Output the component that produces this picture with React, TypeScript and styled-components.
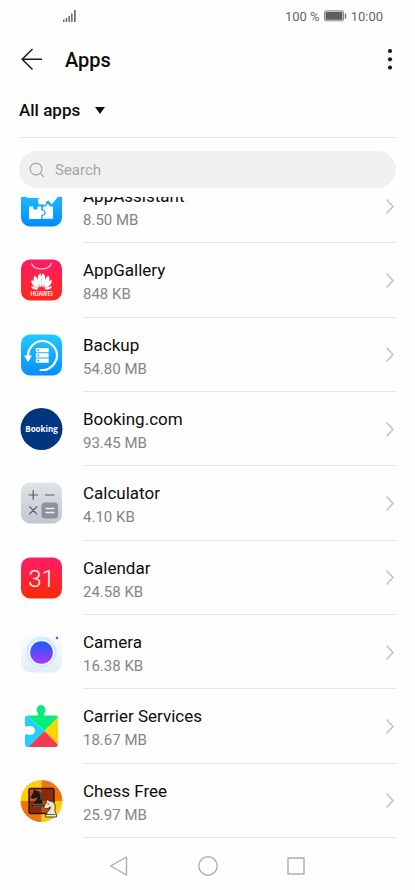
import React from 'react';
import styled, { createGlobalStyle } from 'styled-components';

const GlobalStyle = createGlobalStyle`
  * { box-sizing: border-box; }
  body { margin: 0; background: #fefefe; }
  button, input, select { font: inherit; color: inherit; }
`;

const Screen = styled.div`
  display: flex;
  flex-direction: column;
  height: 100vh;
  overflow: hidden;
  background: #fefefe;
  color: #0c0c0c;
  font-family: Roboto, 'Liberation Sans', sans-serif;
`;

const StatusBar = styled.div`
  display: flex;
  flex: none;
  align-items: center;
  justify-content: space-between;
  height: 32px;
  padding: 0 32px 0 63px;
  color: #666;
  font-size: 13px;
`;

const StatusGroup = styled.div`
  display: flex;
  align-items: center;
  gap: 4px;
`;

const Header = styled.header`
  display: flex;
  flex: none;
  align-items: center;
  height: 56px;
  padding: 0 15px 0 20px;
`;

const IconButton = styled.button`
  display: flex;
  align-items: center;
  justify-content: center;
  padding: 0;
  border: 0;
  background: none;
  cursor: pointer;
`;

const Title = styled.h1`
  flex: 1;
  margin: 0 0 0 21px;
  font-size: 20px;
  font-weight: 500;
  line-height: 24px;
`;

const FilterBar = styled.div`
  display: flex;
  flex: none;
  align-items: center;
  height: 50px;
  margin: 0 19px;
  border-bottom: 1px solid #e6e6e6;
  padding-bottom: 5px;
`;

const FilterLabel = styled.label`
  display: grid;
  align-items: center;
`;

const FilterSelect = styled.select`
  grid-area: 1 / 1;
  appearance: none;
  border: 0;
  padding: 0 25px 0 0;
  background: none;
  font-size: 17px;
  font-weight: 500;
  line-height: 24px;
`;

const Caret = styled.svg`
  grid-area: 1 / 1;
  justify-self: end;
  pointer-events: none;
`;

const SearchBox = styled.label`
  display: flex;
  flex: none;
  align-items: center;
  gap: 10px;
  height: 37px;
  margin: 13px 19px 9px;
  padding: 0 10px;
  border-radius: 19px;
  background: #f0f0f0;
`;

const SearchInput = styled.input`
  flex: 1;
  min-width: 0;
  padding: 0;
  border: 0;
  outline: 0;
  background: none;
  font-size: 15px;
  line-height: 20px;
  &::placeholder { color: #a5a5a5; opacity: 1; }
`;

const Viewport = styled.main`
  display: flex;
  flex: 1;
  flex-direction: column;
  justify-content: flex-end;
  min-height: 0;
  overflow: hidden;
`;

const List = styled.ul`
  display: grid;
  flex: none;
  grid-auto-rows: 1fr;
  min-height: 669px;
  margin: 0;
  padding: 0 19px;
  list-style: none;
`;

const Row = styled.li`
  display: flex;
`;

const RowButton = styled.button`
  display: flex;
  flex: 1;
  gap: 20px;
  padding: 0;
  border: 0;
  background: none;
  text-align: left;
  cursor: pointer;
`;

const AppIcon = styled.svg`
  flex: none;
  align-self: center;
  width: 44px;
  height: 44px;
`;

const RowBody = styled.span`
  display: flex;
  flex: 1;
  align-self: stretch;
  align-items: center;
  justify-content: space-between;
  border-bottom: 1px solid #e6e6e6;
`;

const RowText = styled.span`
  display: flex;
  flex-direction: column;
  line-height: 24px;
  padding-top: 5px;
`;

const AppName = styled.span`
  font-size: 17px;
`;

const AppSize = styled.span`
  color: #858585;
  font-size: 15px;
`;

const NavBar = styled.nav`
  display: flex;
  flex: none;
  align-items: center;
  justify-content: center;
  gap: 64px;
  height: 52px;
  padding-top: 4px;
`;

const Chevron = () => (
  <svg width="12" height="18" viewBox="0 0 12 18" fill="none" stroke="#c4c4c4" strokeWidth="1.600" aria-hidden="true">
    <path d="M2.500 2.500 9 9.500 2.500 16.500" />
  </svg>
);

const Tile = ({ fill }: { fill: string }) => <rect x="2" y="1.500" width="41" height="41" rx="9" fill={fill} />;

const Assistant = () => (
  <AppIcon viewBox="0 0 44 44" aria-hidden="true">
    <defs><linearGradient id="assist" x2="0" y2="1"><stop stopColor="#24c8ff" /><stop offset="1" stopColor="#008cff" /></linearGradient></defs>
    <Tile fill="url(#assist)" />
    <path fill="#fff" d="M10 22.500h4.500c-1 2 .3 3.200 2 3.200s2.800-1.200 1.800-3.200h4v4.300c2-.8 3.200.3 3.200 1.900s-1.200 2.600-3.200 1.800v4.500H10z" />
    <path fill="#fff" d="M24 22.500h3.300c-1-3 3.800-3 3 0H34v12.300H23.500v-3c4 .3 4.300-6 .5-6z" />
    <path fill="#fff" d="M8 8h30v6l-5.500 6.500-3-4-3 1.500c2 3-1.500 4-3.500 2-2 1.500-4 .500-3.500-2-2-2 0-4 2-4H8z" />
  </AppIcon>
);

const Gallery = () => (
  <AppIcon viewBox="0 0 44 44" aria-hidden="true">
    <defs><linearGradient id="gallery" x2="0" y2="1"><stop stopColor="#ff1b68" /><stop offset="1" stopColor="#fc2b18" /></linearGradient></defs>
    <Tile fill="url(#gallery)" />
    <path d="M12.500 5c2 8 17.500 8 20 0" fill="none" stroke="#ffc3d0" strokeWidth="1.200" />
    <g fill="#fff">
      <path d="M22 29.500C18 24 17.500 17 21.500 15.200c1.300 3 1.500 8 .5 14.300zM23 29.500c4-5.500 4.500-12.500.5-14.300-1.300 3-1.500 8-.5 14.300z" />
      <path d="M20.700 29.500C15 26 12.800 20.500 16 17.500c3 3 4.200 7 4.700 12zM24.300 29.500c5.700-3.500 7.900-9 4.700-12-3 3-4.200 7-4.700 12z" />
      <path d="M19.700 30c-5-1-8.200-4.500-7.200-8.300 3.500 1.500 5.500 4.300 7.200 8.300zM25.300 30c5-1 8.200-4.500 7.200-8.300-3.500 1.500-5.500 4.300-7.200 8.300z" />
      <path d="M19.500 31c-3.500 1.200-6.500.3-7.500-2.800 3.500 0 5.500 1 7.500 2.800zM25.500 31c3.500 1.200 6.500.3 7.500-2.800-3.500 0-5.500 1-7.500 2.800z" />
      <text x="22.500" y="37.500" textAnchor="middle" fontFamily="Inter" fontSize="5.500" fontWeight="600">HUAWEI</text>
    </g>
  </AppIcon>
);

const Backup = () => (
  <AppIcon viewBox="0 0 44 44" aria-hidden="true">
    <defs><linearGradient id="backup" x2="0" y2="1"><stop stopColor="#20c9ff" /><stop offset="1" stopColor="#078eff" /></linearGradient></defs>
    <Tile fill="url(#backup)" />
    <path d="M9 23c0-8 6.500-15 14.500-15S38 15 38 22.300 31.500 37 23.500 37h-2" fill="none" stroke="#fff" strokeWidth="2.200" strokeLinecap="round" />
    <path fill="#fff" d="M5 22.500h8l-4 6.500zM16.800 15h12.900v4.200H16.800zM16.800 20.300h12.900v4.200H16.800zM16.800 25.600h12.900v4.200H16.800z" />
    <g fill="#159bff"><circle cx="19.300" cy="17.100" r=".9" /><circle cx="19.300" cy="22.400" r=".9" /><circle cx="19.300" cy="27.700" r=".9" /></g>
  </AppIcon>
);

const Booking = () => (
  <AppIcon viewBox="0 0 44 44" aria-hidden="true">
    <circle cx="22.500" cy="22" r="21" fill="#003580" />
    <text x="22.500" y="24.500" textAnchor="middle" fontFamily="Open Sans" fontSize="8" fontWeight="700" fill="#fff">Booking</text>
  </AppIcon>
);

const Calculator = () => (
  <AppIcon viewBox="0 0 44 44" aria-hidden="true">
    <defs><linearGradient id="calc" x2="0" y2="1"><stop stopColor="#dfe4e8" /><stop offset="1" stopColor="#c1c7ce" /></linearGradient></defs>
    <Tile fill="url(#calc)" />
    <rect x="22.500" y="21.500" width="16.500" height="16" rx="3.500" fill="#8b929d" />
    <path d="M9.500 14h9.500M14.200 9.300v9.500M26 14h9.500M10.300 25.300l7.800 8M18.100 25.300l-7.800 8" stroke="#565c64" strokeWidth="1.200" />
    <path d="M26.500 27.500h9M26.500 31.500h9" stroke="#edf0f3" strokeWidth="1.300" />
  </AppIcon>
);

const Calendar = () => (
  <AppIcon viewBox="0 0 44 44" aria-hidden="true">
    <defs><linearGradient id="cal" x2="0" y2="1"><stop stopColor="#ff1c66" /><stop offset="1" stopColor="#fb2a08" /></linearGradient></defs>
    <Tile fill="url(#cal)" />
    <text x="22.500" y="30.500" textAnchor="middle" fontFamily="Roboto" fontSize="24" fontWeight="300" fill="#fff">31</text>
  </AppIcon>
);

const Camera = () => (
  <AppIcon viewBox="0 0 44 44" aria-hidden="true">
    <defs>
      <linearGradient id="cam" x2="0" y2="1"><stop stopColor="#fdfefe" /><stop offset="1" stopColor="#e2edf6" /></linearGradient>
      <linearGradient id="lens" x2="0" y2="1"><stop stopColor="#195cf6" /><stop offset="1" stopColor="#a638fa" /></linearGradient>
    </defs>
    <Tile fill="url(#cam)" />
    <circle cx="22.500" cy="22.500" r="16.500" fill="#e5f1fc" />
    <circle cx="22.500" cy="22.500" r="14.200" fill="#e7f3ff" stroke="#c6e0fa" />
    <circle cx="22.500" cy="22.500" r="11.300" fill="url(#lens)" />
    <circle cx="38" cy="8" r="1.200" fill="#554be8" />
  </AppIcon>
);

const Carrier = () => (
  <AppIcon viewBox="0 0 44 44" aria-hidden="true">
    <defs><clipPath id="puzzle"><path d="M8.500 11.500h10c1-.5.8-1.300 0-2.500C16.500 5 18.500 1 22 1s5.500 4 3.500 8c-.8 1.200-1 2 0 2.500H36q3 0 3 3V40q0 3-3 3H9q-3 0-3-3V31.500c.8-1.500 1.800-1.200 3-.8 4 1 7-1.200 7-4.200s-3-5.200-7-4.200c-1.200.4-2.200.7-3-.8v-7q0-3 2.500-3z" /></clipPath></defs>
    <g clipPath="url(#puzzle)">
      <path fill="#00ee79" d="M0 0h44v8L25.500 27 5 9z" />
      <path fill="#20d2fb" d="M0 5 25.500 27 6 47H0z" />
      <path fill="#ffd501" d="M44 8v38L25.500 27z" />
      <path fill="#f43c50" d="m25.500 27 19 19.500H6z" />
    </g>
  </AppIcon>
);

const knight = 'M3.500 16.500c0-3 4-4.500 3.500-7L3 11 .5 9.500 3.500 4 4 1l2.500 2c4 0 6.500 3 5.500 8.500-.2 2 .5 3.500 1.500 5V19h-11v-2.500z';

const Chess = () => (
  <AppIcon viewBox="0 0 44 44" aria-hidden="true">
    <defs><clipPath id="disc"><circle cx="22.500" cy="22" r="21" /></clipPath></defs>
    <g clipPath="url(#disc)">
      <path fill="#fdcf05" d="M0 0h22.500v22H0zM22.500 22H44v22H22.500z" />
      <path fill="#ef740b" d="M22.500 0H44v22H22.500zM0 22h22.500v22H0z" />
    </g>
    <rect x="10" y="9.500" width="25" height="25" rx="1.500" fill="#8c2b0c" stroke="#35130b" strokeWidth="1.500" />
    <path fill="#c8540d" d="M11 10.500h11.500V22H11zM22.500 22H34v11.500H22.500z" />
    <path transform="translate(11 9)" d={knight} fill="#1b1715" />
    <path transform="translate(11 9)" d="M3 18.200h10M3 16.300h10M9 4.500c2 1.500 2.500 4 2 7" stroke="#aa9275" strokeWidth=".7" fill="none" />
    <path transform="translate(24 19)" d={knight} fill="#eee5cc" stroke="#29211c" strokeWidth=".8" />
    <path transform="translate(24 19)" d="M3.500 16.500h9M8 8.500 6 12M4.500 6h1.500" stroke="#29211c" strokeWidth=".7" />
  </AppIcon>
);

const apps = [
  { name: 'AppAssistant', size: '8.50 MB', Icon: Assistant },
  { name: 'AppGallery', size: '848 KB', Icon: Gallery },
  { name: 'Backup', size: '54.80 MB', Icon: Backup },
  { name: 'Booking.com', size: '93.45 MB', Icon: Booking },
  { name: 'Calculator', size: '4.10 KB', Icon: Calculator },
  { name: 'Calendar', size: '24.58 KB', Icon: Calendar },
  { name: 'Camera', size: '16.38 KB', Icon: Camera },
  { name: 'Carrier Services', size: '18.67 MB', Icon: Carrier },
  { name: 'Chess Free', size: '25.97 MB', Icon: Chess },
];

export default function App() {
  return (
    <Screen>
      <GlobalStyle />
      <StatusBar>
        <svg width="14" height="12" viewBox="0 0 14 12" fill="#6b6b6b" aria-hidden="true">
          <path d="M0 9.500h1.500V12H0zM2.700 8h1.500v4H2.700zM5.400 6h1.500v6H5.400zM8.100 3.500h1.500V12H8.100zM11 0h1.700v12H11z" />
        </svg>
        <StatusGroup>
          <span>100 %</span>
          <svg width="23" height="12" viewBox="0 0 23 12" aria-hidden="true">
            <rect x=".5" y=".8" width="19" height="10" rx="1.500" fill="none" stroke="#8a8a8a" />
            <rect x="1.500" y="1.800" width="17" height="8" fill="#5f5f5f" />
            <path d="M21.500 3.500v5" stroke="#777" strokeWidth="1.500" />
          </svg>
          <span>10:00</span>
        </StatusGroup>
      </StatusBar>
      <Header>
        <IconButton aria-label="Back">
          <svg width="24" height="24" viewBox="0 0 24 24" fill="none" stroke="#1a1a1a" strokeWidth="1.500">
            <path d="M12.500 1 2.200 11.200 12.500 21.500M2.200 11.200H22" />
          </svg>
        </IconButton>
        <Title>Apps</Title>
        <IconButton aria-label="More options">
          <svg width="20" height="24" viewBox="0 0 20 24" fill="#1a1a1a">
            <circle cx="10" cy="3" r="2.100" /><circle cx="10" cy="11.300" r="2.100" /><circle cx="10" cy="19.600" r="2.100" />
          </svg>
        </IconButton>
      </Header>
      <FilterBar>
        <FilterLabel>
          <FilterSelect aria-label="Filter apps"><option>All apps</option></FilterSelect>
          <Caret width="12" height="10" viewBox="0 0 12 10" fill="#111" aria-hidden="true"><path d="M1 2h10L6 9z" /></Caret>
        </FilterLabel>
      </FilterBar>
      <SearchBox>
        <svg width="16" height="16" viewBox="0 0 16 16" fill="none" stroke="#a3a3a3" strokeWidth="1.100" aria-hidden="true">
          <circle cx="7" cy="7" r="5.900" /><path d="m11.200 11.200 3.800 3.900" />
        </svg>
        <SearchInput type="search" aria-label="Search apps" placeholder="Search" />
      </SearchBox>
      <Viewport>
        <List>
          {apps.map(({ name, size, Icon }) => (
            <Row key={name}>
              <RowButton>
                <Icon />
                <RowBody>
                  <RowText><AppName>{name}</AppName><AppSize>{size}</AppSize></RowText>
                  <Chevron />
                </RowBody>
              </RowButton>
            </Row>
          ))}
        </List>
      </Viewport>
      <NavBar>
        <IconButton aria-label="Navigate back">
          <svg width="24" height="24" viewBox="0 0 24 24" fill="none" stroke="#adadad" strokeWidth="1.400" strokeLinejoin="round"><path d="M18.500 3v18L2.700 12z" /></svg>
        </IconButton>
        <IconButton aria-label="Home">
          <svg width="24" height="24" viewBox="0 0 24 24" fill="none" stroke="#adadad" strokeWidth="1.400"><circle cx="12" cy="12" r="9.200" /></svg>
        </IconButton>
        <IconButton aria-label="Recent apps">
          <svg width="24" height="24" viewBox="0 0 24 24" fill="none" stroke="#adadad" strokeWidth="1.400" strokeLinejoin="round"><rect x="4" y="4" width="16" height="16" /></svg>
        </IconButton>
      </NavBar>
    </Screen>
  );
}
